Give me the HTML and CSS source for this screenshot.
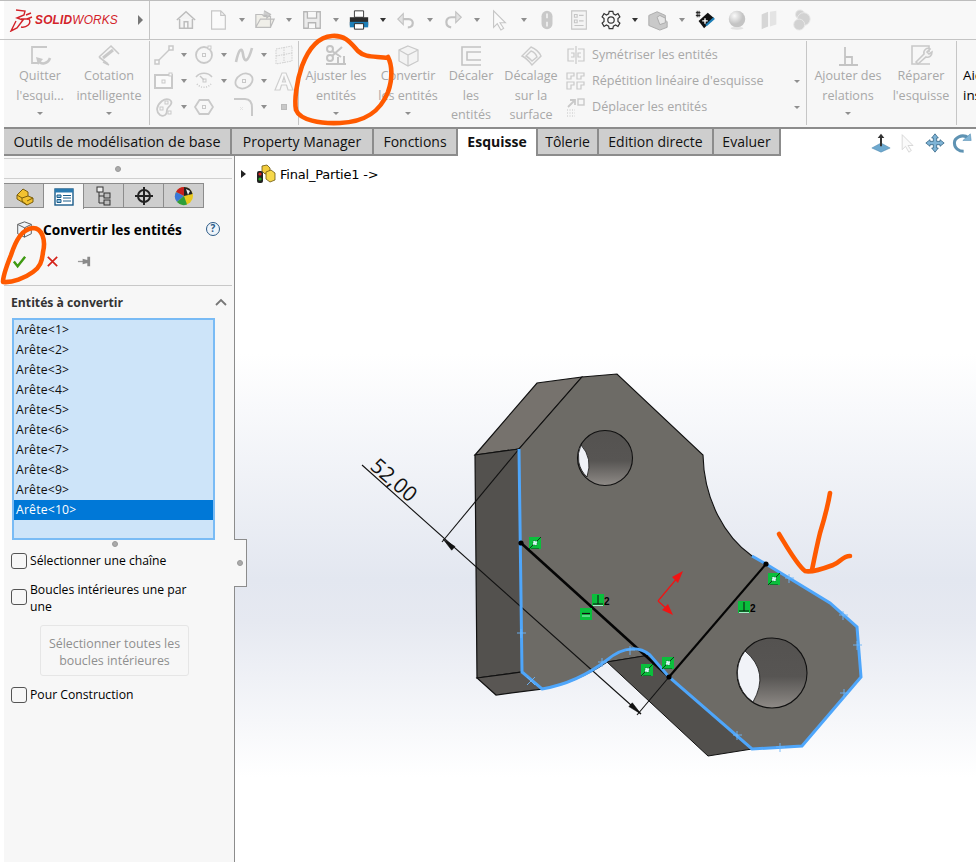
FILE: index.html
```html
<!DOCTYPE html>
<html lang="fr">
<head>
<meta charset="utf-8">
<title>SOLIDWORKS - Convertir les entités</title>
<link rel="stylesheet" href="styles.css">
</head>
<body>
<div class="app">
  <header class="topbar">
    <div class="logo">
      <svg class="ds" viewBox="0 0 24 24" width="24" height="24" fill="none" stroke="#d3232a" stroke-width="1.4"><path d="M7 2 L16 3 L15 7 L8 10 L14 12 L8 20 L2 23 L7 13 M12 11 L20 11 C23 16 17 20 12 19"/><path d="M17 7 L22 5 M18 11 L23 9"/></svg>
      <span class="solid">SOLID</span><span class="works">WORKS</span>
    </div>
    <div class="logo-arrow"><i class="tri-right"></i></div>
    <div class="quick">
      <svg class="ti first" viewBox="0 0 24 24" fill="#f4f4f4" stroke="#bdbdbd" stroke-width="1.6"><path d="M2 12 L12 3 L22 12 M5 11 V21 H19 V11 M10 21 V14 H14 V21"/></svg>
      <svg class="ti sp" viewBox="0 0 24 24" fill="#fafafa" stroke="#c6c6c6" stroke-width="1.3"><path d="M5 2 H15 L20 7 V22 H5 Z M15 2 V7 H20"/></svg><i class="dd"></i>
      <svg class="ti" viewBox="0 0 24 24" fill="#f0efe9" stroke="#bdbdbd" stroke-width="1.3"><path d="M2 6 H9 L11 8 H18 V20 H2 Z M2 20 L7 11 H22 L18 20"/><path d="M11 2 L18 6 L14 10 V7 H10" fill="#cfcfcf"/></svg><i class="dd"></i>
      <svg class="ti" viewBox="0 0 24 24" fill="#ebebeb" stroke="#b5b5b5" stroke-width="1.4"><path d="M3 3 H21 V21 H3 Z"/><path d="M7 3 V10 H17 V3 M8 21 V15 H16 V21" fill="#f8f8f8"/></svg><i class="dd"></i>
      <svg class="ti" viewBox="0 0 24 24"><path d="M7 2 H17 V9 H7 Z" fill="#fff" stroke="#333"/><path d="M2 9 H22 V18 H2 Z" fill="#2c2c2c"/><path d="M2 14 H22 V20 H2 Z" fill="#1e7fb8"/><path d="M7 16 H17 V22 H7 Z" fill="#fff" stroke="#222"/></svg><i class="dd dark"></i>
      <svg class="ti" viewBox="0 0 24 24" fill="none" stroke="#c2c2c2" stroke-width="2.4"><path d="M8 11 H15 C21 11 21 20 14 20"/><path d="M3 11 L9 5 V17 Z" fill="#e2e2e2" stroke-width="1.2"/></svg><i class="dd"></i>
      <svg class="ti" viewBox="0 0 24 24" fill="none" stroke="#c2c2c2" stroke-width="2.4"><path d="M16 9 H10 C3 9 3 19 10 20"/><path d="M21 9 L15 3 V15 Z" fill="#e2e2e2" stroke-width="1.2"/></svg><i class="dd"></i>
      <svg class="ti" viewBox="0 0 24 24" fill="#fafafa" stroke="#c6c6c6" stroke-width="1.2"><path d="M5 2 V20 L9 16 L13 23 L16 21 L12 15 H18 Z"/></svg><i class="dd"></i>
      <svg class="ti narrow" viewBox="0 0 24 24"><rect x="6" y="2" width="12" height="20" rx="6" fill="#c9c9c9"/><path d="M12 5 V10 M12 14 V19" stroke="#eee" stroke-width="2"/></svg>
      <svg class="ti sp" viewBox="0 0 24 24" fill="#f4f4f4" stroke="#c6c6c6" stroke-width="1.2"><path d="M4 2 H20 V22 H4 Z M7 6 H10 V9 H7 Z M12 7 H17 M7 12 H10 V15 H7 Z M12 13 H17 M7 18 H17"/></svg>
      <svg class="ti sp" viewBox="0 0 24 24" fill="none" stroke="#333" stroke-width="1.3"><circle cx="12" cy="12" r="3.5"/><path d="M10 2.5 H14 L14.6 5.3 L17 6.5 L19.6 5 L21.7 8.6 L19.6 10.5 V13.5 L21.7 15.4 L19.6 19 L17 17.5 L14.6 18.7 L14 21.5 H10 L9.4 18.7 L7 17.5 L4.4 19 L2.3 15.4 L4.4 13.5 V10.5 L2.3 8.6 L4.4 5 L7 6.5 L9.4 5.3 Z"/></svg><i class="dd dark"></i>
      <svg class="ti" viewBox="0 0 24 24" fill="#c9c9c9" stroke="#a9a9a9"><path d="M2 7 L11 3 L20 7 V12 L22 14 V20 L14 23 L2 18 Z"/><path d="M11 9 L14 7 L20 10 V15 L14 17 Z" fill="#e6e6e6"/></svg><i class="dd"></i>
      <svg class="ti" viewBox="0 0 24 24"><path d="M5 13 L15 4 L22 10 L11 21 Z" fill="#111"/><path d="M13 18 L22 10" stroke="#1e7fb8" stroke-width="2.4"/><path d="M9 13 H15 M12 10 V16" stroke="#fff" stroke-width="1.5"/><path d="M2 4 H7 M2 7 H7 M3.5 2 V9 M5.5 2 V9" stroke="#111"/></svg>
      <svg class="ti sp" viewBox="0 0 24 24"><defs><radialGradient id="sph" cx=".35" cy=".3"><stop offset="0" stop-color="#fafafa"/><stop offset="1" stop-color="#c4c4c4"/></radialGradient></defs><circle cx="12" cy="11" r="9" fill="url(#sph)"/><ellipse cx="12" cy="21" rx="7" ry="1.5" fill="#e2e2e2"/></svg>
      <svg class="ti sp" viewBox="0 0 24 24"><path d="M4 6 L11 3 V19 L4 22 Z" fill="#d6d6d6"/><path d="M13 3 L20 2 V17 L13 19 Z" fill="#e4e4e4"/></svg>
      <svg class="ti sp" viewBox="0 0 24 24" fill="#d2d2d2" stroke="#e8e8e8"><circle cx="11" cy="6" r="5"/><circle cx="15" cy="11" r="7"/><circle cx="10" cy="17" r="6"/></svg>
    </div>
  </header>

  <section class="ribbon">
    <div class="rgroup g1">
      <div class="big w-quit">
        <svg class="bi" viewBox="0 0 24 24" fill="none" stroke="#c9c9c9" stroke-width="1.8"><path d="M19 3 H4 V19 H10"/><path d="M22 14 C20 20 13 21 11 17" stroke-width="2.6"/><path d="M8 13 L15 15 L10 21 Z" fill="#c9c9c9" stroke="none"/></svg>
        <span class="lb">Quitter<br>l'esqui...</span><i class="dd cr"></i>
      </div>
      <div class="big w-cot">
        <svg class="bi" viewBox="0 0 24 24" fill="none" stroke="#c9c9c9" stroke-width="1.6"><path d="M2 13 L14 2 L22 10 M11 20 L2 13"/><path d="M6 14 L16 6" stroke-width="3"/><path d="M6 18 L12 21"/></svg>
        <span class="lb">Cotation<br>intelligente</span><i class="dd cr"></i>
      </div>
    </div>
    <div class="rgroup g2">
      <svg class="si" viewBox="0 0 20 20" fill="#fafafa" stroke="#c9c9c9" stroke-width="1.5"><path d="M3 17 L17 3"/><rect x="1" y="15" width="4" height="4"/><rect x="15" y="1" width="4" height="4"/></svg><i class="dd c"></i>
      <svg class="si" viewBox="0 0 20 20" fill="none" stroke="#c9c9c9" stroke-width="1.8"><circle cx="10" cy="10" r="8"/><rect x="8.5" y="8.5" width="3" height="3" stroke-width="1"/><rect x="14" y="1" width="3" height="3" stroke-width="1" fill="#fafafa"/></svg><i class="dd c"></i>
      <svg class="si" viewBox="0 0 20 20" fill="none" stroke="#c9c9c9" stroke-width="2.6"><path d="M2 17 C5 3 8 2 9 9 C10 18 14 18 18 3"/></svg><i class="dd c"></i>
      <svg class="si" viewBox="0 0 20 20" fill="#f4f4f4" stroke="#cfcfcf" stroke-dasharray="1.5 1"><path d="M2 4 L18 1 V16 L2 19 Z M10 2 V18 M2 11 L18 8"/></svg><i class="c-blank"></i>

      <svg class="si" viewBox="0 0 20 20" fill="#fafafa" stroke="#c9c9c9" stroke-width="2"><rect x="1" y="4" width="17" height="13"/><rect x="8" y="9" width="3" height="3" stroke-width="1"/><rect x="15" y="2" width="3" height="3" stroke-width="1"/></svg><i class="dd c"></i>
      <svg class="si" viewBox="0 0 20 20" fill="none" stroke="#c9c9c9" stroke-width="1.5"><path d="M2 6 C6 1 14 1 18 6"/><path d="M3 13 A9 9 0 0 0 17 13" stroke-dasharray="1 1.5"/><path d="M6 5 L10 9" /><rect x="9" y="8" width="3" height="3" stroke-width="1"/></svg><i class="dd c"></i>
      <svg class="si" viewBox="0 0 20 20" fill="none" stroke="#c9c9c9" stroke-width="1.8"><ellipse cx="10" cy="10" rx="9" ry="7" transform="rotate(-30 10 10)"/><rect x="8.5" y="8.5" width="3" height="3" stroke-width="1"/></svg><i class="dd c"></i>
      <svg class="si" viewBox="0 0 20 20" fill="#fafafa" stroke="#cfcfcf" stroke-width="1.2"><path d="M1 19 L8 2 H12 L19 19 H14 L12.5 14 H7.5 L6 19 Z M8.5 11 H11.5 L10 6 Z"/></svg><i class="c-blank"></i>

      <svg class="si" viewBox="0 0 20 20" fill="none" stroke="#c9c9c9" stroke-width="1.8"><path d="M6 18 C1 14 3 8 8 4 C13 0 19 3 17 7 C16 10 13 10 13 13 C13 18 10 20 6 18 Z"/><rect x="6" y="10" width="3" height="3" stroke-width="1"/><rect x="11" y="4" width="3" height="3" stroke-width="1"/><rect x="14" y="14" width="3" height="3" stroke-width="1" fill="#fafafa"/></svg><i class="dd c"></i>
      <svg class="si" viewBox="0 0 20 20" fill="none" stroke="#c9c9c9" stroke-width="1.8"><path d="M1 10 L5.5 3 H14.5 L19 10 L14.5 17 H5.5 Z"/><rect x="8.5" y="8.5" width="3" height="3" stroke-width="1"/></svg><i class="c-blank"></i>
      <svg class="si" viewBox="0 0 20 20" fill="none" stroke="#c9c9c9" stroke-width="2"><path d="M0 2 H11 C16 2 18 6 18 11 V19"/><path d="M6 10 L9 13 M9 10 L6 13" stroke="#e4e4e4" stroke-width="1"/></svg><i class="dd c"></i>
      <span class="mini"><i></i></span><i class="c-blank"></i>
    </div>
    <div class="rgroup g3">
      <div class="big w-aj">
        <svg class="bi" viewBox="0 0 24 24" fill="none" stroke="#c4c4c4" stroke-width="2"><circle cx="6" cy="5" r="3"/><circle cx="6" cy="14" r="3"/><path d="M8 7 L17 13 M8 12 L18 3 M2 20 H22 M14 13 V21 M20 12 V21"/></svg>
        <span class="lb">Ajuster les<br>entités</span><i class="dd cr"></i>
      </div>
      <div class="big w-con">
        <svg class="bi" viewBox="0 0 24 24" fill="#f3f3f3" stroke="#c9c9c9" stroke-width="1.2"><path d="M12 2 L22 6 V17 L12 22 L3 17 V6 Z"/><path d="M3 6 L12 11 L22 6 M12 11 V22"/></svg>
        <span class="lb">Convertir<br>les entités</span><i class="dd cr"></i>
      </div>
      <div class="big w-dec">
        <svg class="bi" viewBox="0 0 24 24" fill="none" stroke="#c4c4c4" stroke-width="1.6"><path d="M22 3 H3 V21 H22"/><path d="M22 8 H8 V16 H22"/></svg>
        <span class="lb">Décaler<br>les<br>entités</span>
      </div>
      <div class="big w-dsu">
        <svg class="bi" viewBox="0 0 24 24" fill="#f6f6f6" stroke="#cbcbcb" stroke-width="1.4"><path d="M3 12 L12 3 C17 5 20 8 22 12 L13 21 C10 17 7 14 3 12 Z"/><path d="M7 12 L12 7 C15 8 17 10 18 13 L13 17 C11 15 9 13 7 12 Z"/></svg>
        <span class="lb">Décalage<br>sur la<br>surface</span>
      </div>
      <div class="rlist">
        <div class="rrow">
          <svg class="ri" viewBox="0 0 20 20" fill="none" stroke="#c9c9c9" stroke-width="1.2"><path d="M8 4 H2 V16 H8 M12 4 H18 V16 H12 M10 1 V19 M5 8 H8 V12 H5 M15 8 H12 V12 H15"/></svg>
          <span>Symétriser les entités</span>
        </div>
        <div class="rrow">
          <svg class="ri" viewBox="0 0 20 20" fill="none" stroke="#c9c9c9" stroke-width="1.2"><path d="M1 2 H8 V5 H5 V8 H1 Z M11 2 H18 V5 H15 V8 H11 Z M1 11 H8 V14 H5 V18 H1 Z M11 11 H18 V14 H15 V18 H11 Z"/></svg>
          <span>Répétition linéaire d'esquisse</span><i class="dd rc"></i>
        </div>
        <div class="rrow">
          <svg class="ri" viewBox="0 0 20 20" fill="none" stroke="#c9c9c9" stroke-width="1.8"><rect x="12" y="2" width="6" height="6" stroke-width="1.4"/><path d="M2 10 L9 3 M4 3 H9 V8"/><path d="M1 13 H9 M1 16 H9 M1 19 H9" stroke-dasharray="1 1.5" stroke="#dedede"/></svg>
          <span>Déplacer les entités</span><i class="dd rc"></i>
        </div>
      </div>
    </div>
    <div class="rgroup g4">
      <div class="big w-rel">
        <svg class="bi" viewBox="0 0 24 24" fill="none" stroke="#c4c4c4" stroke-width="1.8"><path d="M3 21 H22 M9 3 V21 M9 13 H16 V21"/></svg>
        <span class="lb">Ajouter des<br>relations</span><i class="dd cr"></i>
      </div>
      <div class="big w-rep">
        <svg class="bi" viewBox="0 0 24 24" fill="none" stroke="#c9c9c9" stroke-width="1.6"><path d="M20 8 V2 H3 V20 H21"/><path d="M7 18 L15 10 C14 6 18 3 21 5 L18 8 L20 10 L23 8 C23 12 20 14 17 13 L9 20 Z" fill="#f4f4f4"/></svg>
        <span class="lb">Réparer<br>l'esquisse</span>
      </div>
    </div>
    <div class="g5">Aides<br>instantanées</div>
  </section>

  <nav class="tabs">
    <span class="tab t1">Outils de modélisation de base</span>
    <span class="tab t2">Property Manager</span>
    <span class="tab t3">Fonctions</span>
    <span class="tab active t4">Esquisse</span>
    <span class="tab t5">Tôlerie</span>
    <span class="tab t6">Edition directe</span>
    <span class="tab t7">Evaluer</span>
    <div class="hud">
      <svg class="hi" viewBox="0 0 24 24"><path d="M1 18 L12 12 L23 18 L12 23 Z" fill="#6ea9cf" stroke="#4d87ad" stroke-width=".6"/><path d="M12 3 V16" stroke="#333" stroke-width="2.4"/><path d="M8 6 L12 1 L16 6 Z" fill="#333"/></svg>
      <svg class="hi" viewBox="0 0 24 24" fill="#fafafa" stroke="#d2d2d2"><path d="M5 2 V20 L9 16 L13 23 L16 21 L12 15 H18 Z"/></svg>
      <svg class="hi" viewBox="0 0 24 24" fill="#7fb4d6" stroke="#2d5f80" stroke-width=".9"><path d="M12 1 L16 6 H14 V10 H18 V8 L23 12 L18 16 V14 H14 V18 H16 L12 23 L8 18 H10 V14 H6 V16 L1 12 L6 8 V10 H10 V6 H8 Z"/></svg>
      <svg class="hi" viewBox="0 0 24 24" fill="none"><path d="M20 6 C12 0 2 6 3 13 C3 18 8 22 14 22" stroke="#5f93b3" stroke-width="3.6"/><path d="M13 9 L23 9 L22 1 Z" fill="#7fb4d6" stroke="#4d87ad" stroke-width=".6"/></svg>
    </div>
  </nav>

  <main class="main">
    <aside class="panel">
      <div class="handle"><i class="dot"></i></div>
      <div class="ptabs">
        <span class="ptab"><svg viewBox="0 0 20 20" width="20" height="20"><path d="M3 9 L9 3 L14 6 V10 L19 12 V16 L13 19 L3 13 Z" fill="#f2c230" stroke="#7a5d0c"/><path d="M3 9 L8 12 L14 10 M8 12 V15 L13 19 M13 15 L19 12" fill="none" stroke="#7a5d0c"/></svg></span>
        <span class="ptab on"><svg viewBox="0 0 20 20" width="20" height="20"><rect x="1" y="2" width="18" height="16" fill="#fff" stroke="#1b5c8a" stroke-width="1.4"/><rect x="1" y="2" width="18" height="3.5" fill="#2a7ab0"/><path d="M3 8 H7 V10.5 H3 Z M3 12.5 H7 V15.5 H3 Z M9 8.5 H17 M9 11 H17 M9 14 H17" fill="#8fc0e0" stroke="#1b5c8a"/></svg></span>
        <span class="ptab"><svg viewBox="0 0 20 20" width="20" height="20" fill="#eee" stroke="#333"><rect x="3" y="1" width="6" height="5"/><rect x="10" y="7" width="6" height="5" fill="#bbb"/><rect x="10" y="14" width="6" height="5" fill="#bbb"/><path d="M5 6 V17 H10 M5 10 H10" fill="none"/></svg></span>
        <span class="ptab"><svg viewBox="0 0 20 20" width="20" height="20" fill="none" stroke="#222" stroke-width="2"><circle cx="10" cy="10" r="6"/><path d="M10 1 V19 M1 10 H19"/></svg></span>
        <span class="ptab"><svg viewBox="0 0 20 20" width="20" height="20"><circle cx="10" cy="10" r="9" fill="#e8c81e"/><path d="M10 10 L10 1 A9 9 0 0 0 2 6 Z" fill="#c62020"/><path d="M10 10 L2 6 A9 9 0 0 0 3 16 Z" fill="#3a78d8"/><path d="M10 10 L3 16 A9 9 0 0 0 13 18.5 Z" fill="#2d9e3a"/><path d="M10 10 L10 1 A9 9 0 0 1 18.5 8 Z" fill="#222"/><path d="M12 3 L16 5 L14 9 Z" fill="#eee"/></svg></span>
      </div>
      <div class="title">
        <svg class="ticon" viewBox="0 0 20 20" fill="#f0f4f8" stroke="#555" stroke-width="1.1"><path d="M10 1 L18 4 V15 L10 19 L2 15 V4 Z"/><path d="M2 4 L10 8 L18 4 M10 8 V19"/></svg>
        <span class="ttext">Convertir les entités</span>
        <span class="help">?</span>
      </div>
      <div class="actions">
        <svg class="act" viewBox="0 0 16 16" fill="none" stroke="#3f9a12" stroke-width="2.6"><path d="M2 8 L6 13 L14 3"/></svg>
        <svg class="act x" viewBox="0 0 16 16" fill="none" stroke="#d5231a" stroke-width="1.8"><path d="M3 3 L13 13 M13 3 L3 13"/></svg>
        <svg class="act pin" viewBox="0 0 16 16"><path d="M1 8 H7" stroke="#999" stroke-width="1.4"/><path d="M6 5 L11 6.5 V9.5 L6 11 Z M11 3 H14 V13 H11 Z" fill="#8a8a8a"/></svg>
      </div>
      <div class="sep"></div>
      <div class="shead"><span>Entités à convertir</span><svg class="chev" viewBox="0 0 12 8" fill="none" stroke="#777" stroke-width="1.8"><path d="M1 7 L6 2 L11 7"/></svg></div>
      <ul class="edges">
        <li>Arête&lt;1&gt;</li><li>Arête&lt;2&gt;</li><li>Arête&lt;3&gt;</li><li>Arête&lt;4&gt;</li><li>Arête&lt;5&gt;</li>
        <li>Arête&lt;6&gt;</li><li>Arête&lt;7&gt;</li><li>Arête&lt;8&gt;</li><li>Arête&lt;9&gt;</li><li class="sel">Arête&lt;10&gt;</li>
      </ul>
      <div class="grip"><i class="dot"></i></div>
      <label class="chk c1"><i class="box"></i><span>Sélectionner une chaîne</span></label>
      <label class="chk c2"><i class="box"></i><span>Boucles intérieures une par une</span></label>
      <div class="dbtn">Sélectionner toutes les<br>boucles intérieures</div>
      <label class="chk c3"><i class="box"></i><span>Pour Construction</span></label>
    </aside>
    <div class="bump"><i class="dot"></i></div>

    <div class="viewport">
      <div class="tree">
        <i class="tri-right small"></i>
        <svg class="part" viewBox="0 0 20 20"><rect x="1" y="7" width="6" height="12" rx="2" fill="#222"/><circle cx="4" cy="10" r="1.6" fill="#d22"/><circle cx="4" cy="15" r="1.6" fill="#2a2"/><path d="M6 2 L11 1 L14 4 V9 L9 10 L6 7 Z" fill="#f2cc3c" stroke="#6b5510" stroke-width=".8"/><path d="M10 8 L15 6 L19 9 V16 L14 18 L10 15 Z" fill="#f6d84a" stroke="#6b5510" stroke-width=".8"/></svg>
        <span>Final_Partie1 -&gt;</span>
      </div>
      <svg class="scene" viewBox="235 156 741 706" width="741" height="706">
        <defs>
          <linearGradient id="bore" x1="0" y1="0" x2="0" y2="1"><stop offset="0" stop-color="#545250"/><stop offset=".55" stop-color="#575553"/><stop offset="1" stop-color="#8f8b87"/></linearGradient>
          <symbol id="coin" viewBox="0 0 12 12"><rect width="12" height="12" fill="#0abf3c"/><path d="M12 0 L7 5 M0 12 L5 7 M2 12 H10" stroke="#111" stroke-width=".8"/><rect x="4" y="4" width="4" height="4" fill="#cfe" stroke="#333" stroke-width=".5" stroke-dasharray="1 1"/></symbol>
          <symbol id="perp" viewBox="0 0 12 12"><rect width="12" height="12" fill="#0abf3c"/><path d="M6 1 V10 M1 10 H11" stroke="#111" stroke-width="1"/><path d="M1 11.5 H11" stroke="#cfe" stroke-width=".8"/></symbol>
        </defs>
        <path d="M475,455 L537,383 L582,377 L519,449 Z" fill="#76726d" stroke="#111" stroke-width="1.2"/>
        <path d="M475,455 L519,449 L522,672 L477,678 Z" fill="#53514e" stroke="#111" stroke-width="1.2"/>
        <path d="M477,678 L522,672 L542,689 L496,695 Z" fill="#595653" stroke="#111" stroke-width="1.2"/>
        <path d="M519,449 L582,377 L617,374 L703,455 C704,500 725,537 752,556 L766,564 L830,603 L857,627 L861,677 L802,746 L752,749 L669,677 L650,655 L607,662 C585,677 565,685 542,689 L522,672 Z" fill="#6d6b66" stroke="#111" stroke-width="1.1"/>
        <path d="M607,662 L650,655 L669,677 L752,749 L708,756 Z" fill="#52504d" stroke="#111" stroke-width="1"/>
        <circle cx="605" cy="458" r="27.5" fill="url(#bore)" stroke="#111" stroke-width="1.1"/>
        <path d="M581,445 A27.5,27.5 0 0 0 587,477 Q593,458 581,445 Z" fill="#eff1f7" stroke="#111" stroke-width=".8"/>
        <circle cx="772" cy="673" r="35" fill="url(#bore)" stroke="#111" stroke-width="1.1"/>
        <path d="M745,651 A35,35 0 0 0 753,702 Q770,672 745,651 Z" fill="#f1f3f8" stroke="#111" stroke-width=".8"/>

        <g stroke="#111" stroke-width="1.1" fill="none">
          <path d="M362,465 L641,714"/>
          <path d="M519,449 L442,542"/>
          <path d="M669,677 L637,715"/>
        </g>
        <path d="M443,539 L455,546.5 L451.7,550.2 Z M641,714 L632.3,702.8 L628.9,706.6 Z" fill="#111" stroke="#111" stroke-width=".6"/>
        <text class="dim" transform="translate(369,468) rotate(41)">52,00</text>

        <path d="M521,543 L669,677" stroke="#050505" stroke-width="2.6"/>
        <path d="M669,677 L766,564" stroke="#050505" stroke-width="2.2"/>
        <path d="M519,449 L522,672 L542,689 C565,685 585,677 607,660 C625,645 640,647 650,655 L669,677 L752,749 L802,746 L861,677 L857,627 L830,603 L766,564 L752,556" fill="none" stroke="#4ea6fb" stroke-width="3"/>
        <circle cx="521" cy="543" r="2.6" fill="#000"/><circle cx="669" cy="677" r="2.6" fill="#000"/><circle cx="766" cy="564" r="2.6" fill="#000"/>
        <path d="M517,633 H526 M521,629 V638 M527,677 L535,685 M527,685 L535,677 M598,662 H607 M602,658 V667 M626,650 H635 M630,646 V655 M785,578 H794 M789,574 V583 M839,615 H848 M843,611 V620 M853,645 H862 M857,641 V650 M840,693 H849 M844,689 V698 M776,747 H785 M780,743 V752 M733,735 H742 M737,731 V740" stroke="#6cb6fb" stroke-width=".9"/>

        <use href="#coin" x="529" y="537" width="12" height="12"/>
        <use href="#perp" x="592" y="594" width="12" height="12"/>
        <text class="num" x="604" y="605">2</text>
        <rect x="580" y="608" width="12" height="12" fill="#0abf3c"/><path d="M582,613.5 H590" stroke="#111" stroke-width="1.2"/><path d="M582,616 H590" stroke="#cfe" stroke-width=".8"/>
        <use href="#coin" x="641" y="664" width="12" height="12"/>
        <use href="#coin" x="662" y="657" width="12" height="12"/>
        <use href="#coin" x="768" y="573" width="12" height="12"/>
        <use href="#perp" x="738" y="601" width="12" height="12"/>
        <text class="num" x="750" y="612">2</text>

        <path d="M658,601 L678,577 M658,601 L668,610" stroke="#f01414" stroke-width="1.2" fill="none"/>
        <path d="M683,571 L672,577 L678,583 Z M673,615 L662,610 L668,604 Z" fill="#f01414"/>
      </svg>
    </div>
  </main>

  <svg class="ink" viewBox="0 0 976 862" width="976" height="862" fill="none" stroke="#ff5a00" stroke-width="4.6" stroke-linecap="round" stroke-linejoin="round">
    <path d="M388,58 C375,56 365,58 358,51 C350,42 345,35 332,36 C318,37 308,50 302,66 C297,80 294,100 296,110 C300,120 320,124 340,123 C365,122 380,112 388,92 C393,78 392,65 388,57"/>
    <path d="M43,252 C46,240 42,228 33,228 C22,229 16,240 11,255 C7,265 3,275 3,282 C12,283 25,278 33,272 C40,267 42,262 43,252"/>
    <path d="M830,493 C828,505 824,520 820,533 C817,545 814,560 812,570"/>
    <path d="M779,534 C787,547 797,565 805,571 C812,573 825,568 833,565 C840,563 842,556 850,556"/>
  </svg>
</div>
</body>
</html>
```

FILE: styles.css
```css
* { box-sizing: border-box; }
html, body { margin: 0; padding: 0; background: #fff; }
body { width: 976px; height: 862px; overflow: hidden; font-family: "Open Sans", "Noto Sans", sans-serif; color: #000; }
i { display: block; font-style: normal; }
.app { position: relative; width: 976px; height: 862px; padding-left: 4px; overflow: hidden; }

.topbar { display: flex; height: 40px; margin-left: -4px; padding-left: 4px; border-top: 1px solid #bdbdbd; border-bottom: 1px solid #c4c4c4; background: #f8f8f8; box-shadow: inset 4px 0 0 #fff; }
.logo { width: 126px; display: flex; align-items: center; padding-left: 5px; flex: none; }
.ds { margin-right: 2px; flex: none; }
.solid { font: italic bold 11.9px "Liberation Sans", sans-serif; color: #d3232a; letter-spacing: .2px; }
.works { font: italic 11.9px "Liberation Sans", sans-serif; color: #d3232a; letter-spacing: .1px; }
.logo-arrow { width: 20px; flex: none; border-right: 1px solid #c4c4c4; display: flex; align-items: center; padding-left: 8px; }
.tri-right { width: 0; height: 0; border-left: 5px solid #777; border-top: 5px solid transparent; border-bottom: 5px solid transparent; }
.tri-right.small { border-left-color: #222; border-top-width: 4px; border-bottom-width: 4px; }
.quick { display: flex; align-items: center; padding-left: 24px; }
.ti { width: 22px; height: 22px; flex: none; margin: 0 1px; }
.ti.sp { margin-left: 9px; }
.dd { width: 0; height: 0; border-top: 4px solid #8f8f8f; border-left: 3px solid transparent; border-right: 3px solid transparent; margin: 0 8.5px; flex: none; }
.dd.dark { border-top-color: #333; }

.ribbon { display: flex; height: 87px; background: #f7f7f7; overflow: hidden; color: #a8a8a8; font-size: 12.6px; line-height: 19.5px; }
.rgroup { flex: none; display: flex; border-right: 1px solid #c6c6c6; margin-top: 1px; height: 84px; }
.g1 { width: 146px; padding-left: 4px; }
.big { flex: none; display: flex; flex-direction: column; align-items: center; text-align: center; padding-top: 3px; }
.bi { width: 24px; height: 24px; flex: none; margin-bottom: -2px; }
.lb { white-space: nowrap; display: block; }
.cr { margin-top: 7px; border-top-width: 3px; }
.w-quit { width: 64px; }
.w-cot { width: 74px; }
.g2 { width: 149px; padding: 1px 0 0 4px; display: grid; grid-template-columns: repeat(4, 20px 20px); grid-auto-rows: 26px; align-items: center; justify-items: center; align-content: start; }
.si { width: 20px; height: 20px; }
.c { margin: 0; }
.c-blank { width: 20px; }
.mini { display: flex; width: 20px; justify-content: center; }
.mini i { width: 6px; height: 6px; background: #c8c8c8; border: 1px solid #bbb; }
.g3 { width: 508px; padding-left: 3px; }
.w-aj { width: 68px; }
.w-con { width: 76px; }
.w-dec { width: 50px; }
.w-dsu { width: 70px; }
.rlist { flex: 1; display: flex; flex-direction: column; padding-top: 1px; }
.rrow { height: 26px; display: flex; align-items: center; white-space: nowrap; }
.ri { width: 20px; height: 20px; flex: none; margin-right: 6px; }
.rc { margin: 0 6px 0 auto; border-top-width: 3px; }
.g4 { width: 150px; }
.w-rel { width: 82px; }
.w-rep { width: 64px; }
.g5 { flex: none; padding: 26px 0 0 6px; color: #000; white-space: nowrap; width: 19px; overflow: hidden; font-size: 13.4px; }

.tabs { display: flex; height: 29px; border-top: 2px solid #8c8c8c; background: #fff; }
.tab { flex: none; height: 27px; background: #cecece; border-right: 2px solid #8c8c8c; border-bottom: 2px solid #8c8c8c; font-size: 14px; line-height: 26px; text-align: center; white-space: nowrap; color: #111; }
.tab.active { background: #fff; font-weight: 700; border-bottom: 0; }
.t1 { width: 228px; font-size: 14.4px; } .t2 { width: 142px; } .t3 { width: 84px; } .t4 { width: 80px; } .t5 { width: 61px; } .t6 { width: 115px; } .t7 { width: 67px; }
.hud { margin-left: 90px; display: flex; align-items: center; gap: 7px; height: 27px; }
.hi { width: 20px; height: 20px; flex: none; }

.main { position: relative; display: flex; height: 706px; }
.panel { flex: none; width: 231px; background: #f7f7f7; border-right: 1px solid #8c8c8c; display: flex; flex-direction: column; font-size: 12.2px; }
.handle { height: 21px; margin: 2px 2px 0 0; border-top: 1px solid #cfcfcf; border-bottom: 1px solid #cfcfcf; display: flex; align-items: center; justify-content: center; }
.dot { width: 6px; height: 6px; border-radius: 50%; background: #aaa; border: 1px solid #999; }
.ptabs { display: flex; margin-top: 4px; height: 26px; }
.ptab { width: 40px; height: 25px; background: #cecece; border: 1px solid #8c8c8c; border-left: 0; display: flex; align-items: center; justify-content: center; }
.ptab.on { background: #f7f7f7; height: 26px; border-bottom: 0; }
.title { display: flex; align-items: center; height: 24px; margin-top: 8px; padding-left: 12px; }
.ticon { width: 17px; height: 17px; flex: none; margin-right: 10px; }
.ttext { font-weight: 700; font-size: 13.7px; white-space: nowrap; }
.help { margin-left: auto; margin-right: 14px; width: 14px; height: 14px; border: 1.5px solid #2b5a86; border-radius: 50%; font-size: 10px; line-height: 11px; text-align: center; font-weight: 700; color: #2b5a86; background: #eef4fa; }
.actions { display: flex; align-items: center; height: 22px; margin-top: 9px; padding-left: 8px; }
.act { width: 15px; height: 15px; flex: none; }
.act.x { margin-left: 18px; }
.act.pin { margin-left: 17px; }
.sep { height: 1px; margin: 13px 2px 0 0; background: #c8c8c8; }
.shead { display: flex; align-items: center; justify-content: space-between; height: 18px; margin-top: 7px; padding: 0 7px; font-weight: 700; font-size: 12.2px; color: #333; }
.chev { width: 12px; height: 8px; }
.edges { list-style: none; margin: 7px 0 0 8px; padding: 0; width: 203px; height: 222px; background: #cde4f9; border: 2px solid #79bbf5; font-size: 12.2px; letter-spacing: .2px; }
.edges li { height: 20px; line-height: 19px; padding-left: 2px; color: #111; }
.edges li.sel { background: #0078d7; color: #fff; }
.grip { display: flex; justify-content: center; height: 7px; margin-top: 1px; padding-right: 8px; }
.chk { display: flex; align-items: flex-start; padding-left: 7px; line-height: 17px; }
.box { flex: none; width: 16px; height: 16px; border: 1px solid #555; border-radius: 3px; background: #f7f7f7; margin-right: 3px; }
.chk span { max-width: 168px; }
.c1 { margin-top: 5px; }
.c1 span { line-height: 16px; white-space: nowrap; }
.c2 { margin-top: 17px; height: 36px; }
.c2 .box { margin-top: 3px; }
.c2 span { margin-top: -5px; }
.dbtn { width: 149px; height: 51px; margin: 3px 0 0 36px; border: 1px solid #e6e6e6; border-radius: 3px; background: #f7f7f7; color: #8f8f8f; text-align: center; line-height: 17px; padding-top: 9px; font-size: 12.4px; white-space: nowrap; }
.c3 { margin-top: 11px; }
.c3 span { line-height: 16px; }

.bump { position: absolute; left: 230px; top: 383px; z-index: 2; width: 13px; height: 48px; background: #f7f7f7; border: 1px solid #8c8c8c; border-left: 0; display: flex; align-items: center; justify-content: flex-end; padding-right: 3px; }
.viewport { position: relative; flex: 1; height: 706px; background: linear-gradient(180deg, #fff 0%, #fff 28%, #e3e7f0 60%, #e6e9f1 66%, #fff 88%, #fff 100%); overflow: hidden; }
.scene { position: absolute; left: 0; top: 0; }
.tree { position: relative; z-index: 1; display: flex; align-items: center; height: 20px; margin-top: 8px; padding-left: 6px; font: 13px "DejaVu Sans", sans-serif; letter-spacing: -.2px; }
.part { width: 20px; height: 20px; margin: 0 4px 0 10px; flex: none; }
.dim { font: 21px "Open Sans", sans-serif; fill: #111; }
.num { font: bold 10px "Liberation Sans", sans-serif; fill: #000; }
.ink { position: absolute; left: 0; top: 0; pointer-events: none; }
```
